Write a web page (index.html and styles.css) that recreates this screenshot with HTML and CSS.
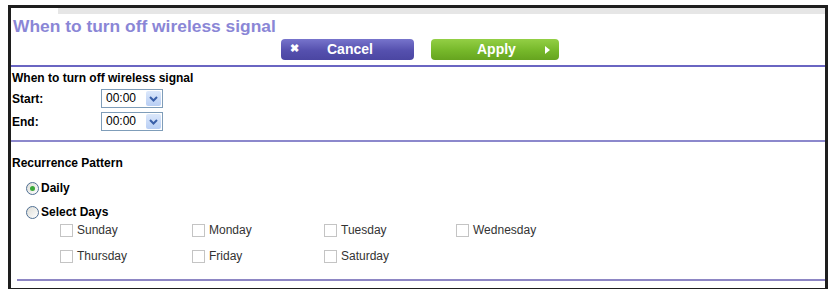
FILE: index.html
```html
<!DOCTYPE html>
<html lang="en">
  <head>
    <meta charset="UTF-8" />
    <title>Wireless Schedule</title>
    <link rel="stylesheet" href="styles.css">
  </head>
  <body>
    <div class="frame">
      <div class="top-band"></div>
      <h1 class="page-title">When to turn off wireless signal</h1>

      <div class="button-row">
        <button class="btn btn-cancel">
          <span class="btn-icon">&#10006;</span>
          <span class="btn-text">Cancel</span>
        </button>
        <button class="btn btn-apply">
          <span class="btn-text">Apply</span>
          <span class="btn-arrow"></span>
        </button>
      </div>

      <div class="rule"></div>

      <div class="section">
        <h3 class="section-title">When to turn off wireless signal</h3>
        <div class="time-row">
          <span class="time-label">Start:</span>
          <span class="fake-select">
            <span class="fake-value">00:00</span>
            <span class="fake-btn">
              <svg width="9" height="6" viewBox="0 0 9 6"><path d="M1 1 L4.5 4.5 L8 1" fill="none" stroke="#3a5fa8" stroke-width="2"/></svg>
            </span>
          </span>
        </div>
        <div class="time-row">
          <span class="time-label">End:</span>
          <span class="fake-select">
            <span class="fake-value">00:00</span>
            <span class="fake-btn">
              <svg width="9" height="6" viewBox="0 0 9 6"><path d="M1 1 L4.5 4.5 L8 1" fill="none" stroke="#3a5fa8" stroke-width="2"/></svg>
            </span>
          </span>
        </div>
      </div>

      <div class="rule rule-light"></div>

      <div class="section">
        <h3 class="section-title section-title-low">Recurrence Pattern</h3>
        <div class="radio-row">
          <span class="radio checked"></span>
          <span class="radio-label">Daily</span>
        </div>
        <div class="radio-row">
          <span class="radio"></span>
          <span class="radio-label">Select Days</span>
        </div>

        <div class="days">
          <div class="day"><span class="check"></span>Sunday</div>
          <div class="day"><span class="check"></span>Monday</div>
          <div class="day"><span class="check"></span>Tuesday</div>
          <div class="day"><span class="check"></span>Wednesday</div>
          <div class="day"><span class="check"></span>Thursday</div>
          <div class="day"><span class="check"></span>Friday</div>
          <div class="day"><span class="check"></span>Saturday</div>
        </div>
      </div>

      <div class="rule rule-bottom"></div>
    </div>
  </body>
</html>
```

FILE: styles.css
```css
body {
  font-family: "Liberation Sans", Arial, sans-serif;
  background-color: #fff;
  margin: 0;
  padding: 0;
}

.frame {
  box-sizing: border-box;
  margin: 5px 3px 0 8px;
  height: 285px;
  border: 3px solid #1e1e1e;
  border-bottom-width: 2px;
  background-color: #fff;
}

.top-band {
  height: 6px;
  margin-left: 47px;
  background-color: #e6e6e6;
}

.page-title {
  margin: 2px 0 0 2px;
  font-size: 17.4px;
  line-height: 20px;
  font-weight: bold;
  color: #8a86d6;
}

.button-row {
  display: flex;
  justify-content: center;
  gap: 17px;
  margin-top: 3px;
  padding-left: 4px;
}

.btn {
  position: relative;
  height: 21px;
  border: none;
  border-radius: 4px;
  padding: 0;
  color: #fff;
  font-family: "Liberation Sans", Arial, sans-serif;
  font-size: 14px;
  font-weight: bold;
  text-align: left;
  cursor: pointer;
}

.btn-cancel {
  width: 133px;
  background: linear-gradient(#7774cc, #5550ae 55%, #4b46a2);
}

.btn-apply {
  width: 128px;
  background: linear-gradient(#93cf45, #76b82a 55%, #66a41f);
}

.btn-icon {
  position: absolute;
  left: 9px;
  top: 3px;
  font-size: 11px;
}

.btn-text {
  position: absolute;
  left: 46px;
  top: 2px;
}

.btn-arrow {
  position: absolute;
  left: 114px;
  top: 7px;
  border-left: 5px solid #fff;
  border-top: 4px solid transparent;
  border-bottom: 4px solid transparent;
}

.rule {
  height: 2px;
  margin-top: 5px;
  background-color: #6a65c2;
}

.rule-light {
  margin-top: 9px;
  height: 2px;
  background-color: #8c88cc;
}

.rule-bottom {
  margin: 13px 0 0 6px;
  height: 2px;
  background-color: #8d86c4;
}

.section {
  padding-left: 1px;
}

.section-title {
  margin: 4px 0 3px 0;
  font-size: 12px;
  line-height: 15px;
  font-weight: bold;
  color: #000;
}

.section-title-low {
  margin-top: 14px;
  margin-bottom: 7px;
}

.time-row {
  display: flex;
  align-items: center;
  height: 19px;
  margin-bottom: 4px;
}

.time-label {
  width: 89px;
  font-size: 12px;
  font-weight: bold;
}

.fake-select {
  display: flex;
  box-sizing: border-box;
  width: 62px;
  height: 19px;
  border: 1px solid #7f9db9;
  background-color: #fff;
}

.fake-value {
  flex: 1;
  padding-left: 4px;
  font-size: 12px;
  line-height: 17px;
  color: #000;
}

.fake-btn {
  display: flex;
  align-items: center;
  justify-content: center;
  width: 15px;
  margin: 1px;
  border-radius: 2px;
  background: linear-gradient(#dce8fb, #b8cef4);
}

.radio-row {
  display: flex;
  align-items: center;
  height: 20px;
  margin-bottom: 4px;
  padding-left: 14px;
}

.radio-row + .radio-row {
  margin-bottom: -2px;
}

.radio {
  position: relative;
  box-sizing: border-box;
  width: 13px;
  height: 13px;
  border: 1px solid #4f6f93;
  border-radius: 50%;
  background: linear-gradient(135deg, #dcdcd6, #fff);
  margin-right: 2px;
}

.radio.checked::after {
  content: "";
  position: absolute;
  left: 3px;
  top: 3px;
  width: 5px;
  height: 5px;
  border-radius: 50%;
  background-color: #3aa83a;
}

.radio-label {
  font-size: 12px;
  font-weight: bold;
}

.days {
  display: grid;
  grid-template-columns: repeat(4, 132px);
  row-gap: 6px;
  padding-left: 48px;
}

.day {
  display: flex;
  align-items: center;
  height: 20px;
  font-size: 12px;
  color: #333;
}

.check {
  box-sizing: border-box;
  width: 13px;
  height: 13px;
  border: 1px solid #c4c4c4;
  margin-right: 4px;
  background-color: #fff;
}
```
